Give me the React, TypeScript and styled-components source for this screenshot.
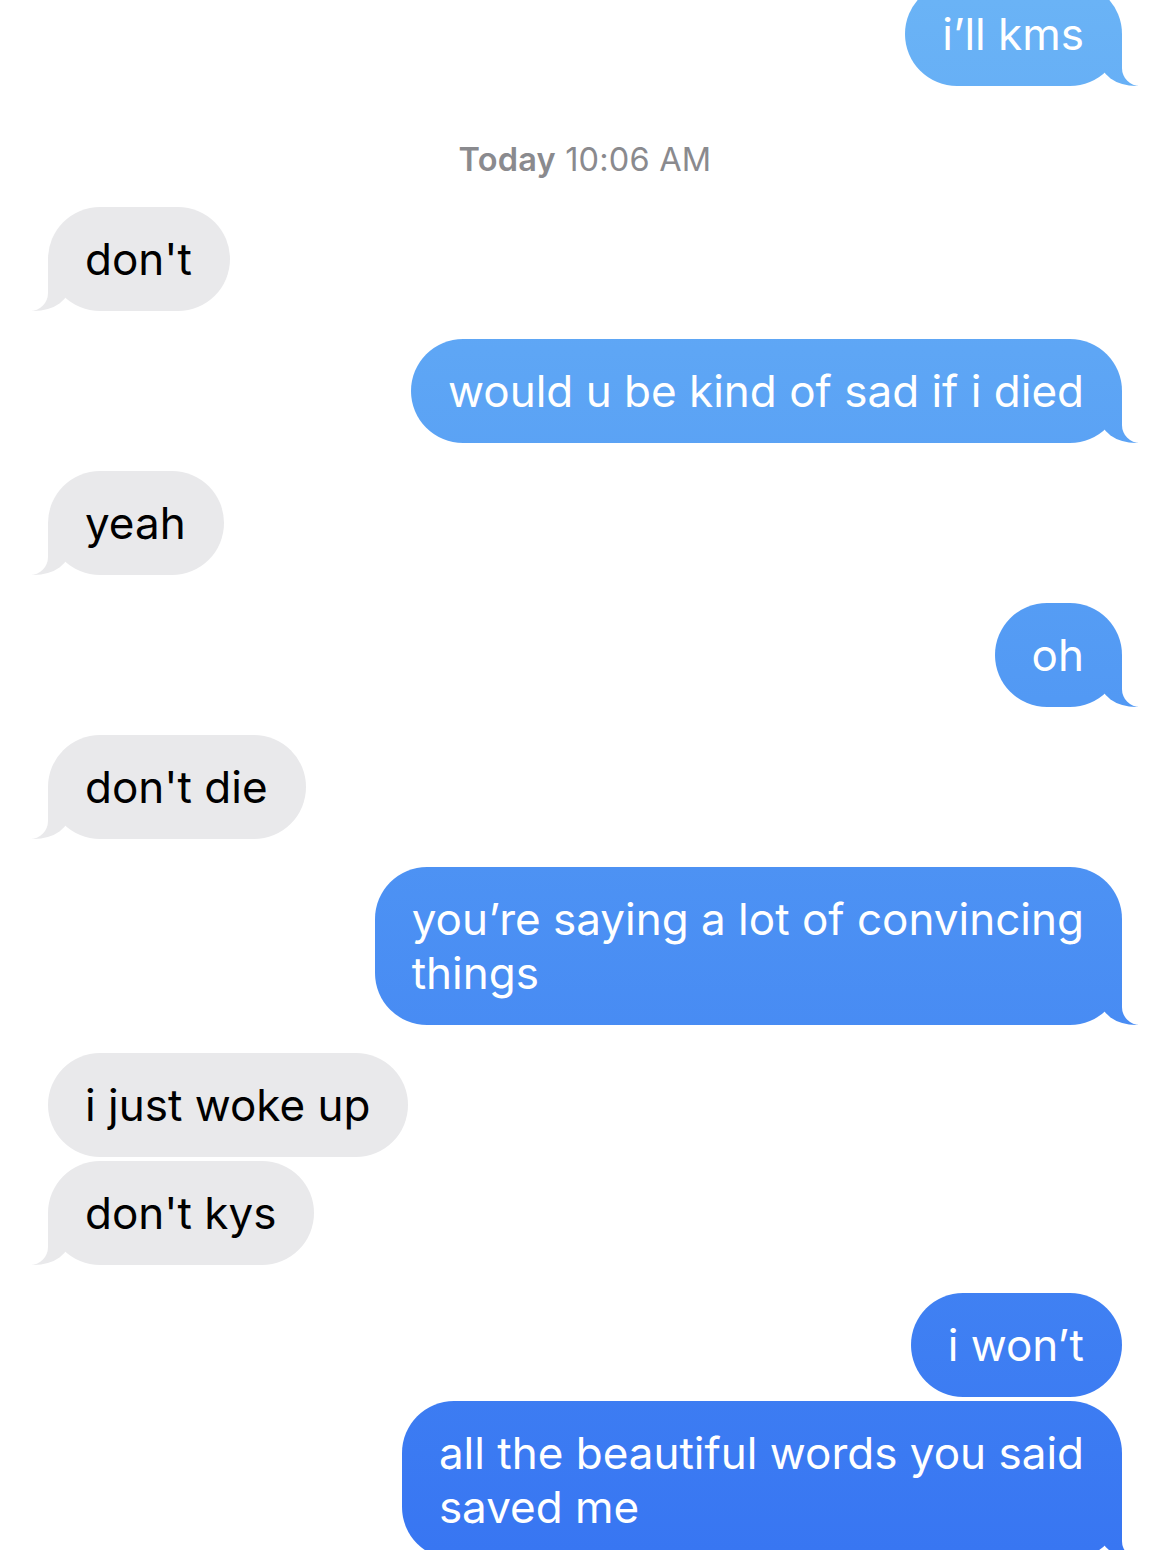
import React from 'react';
import styled, { createGlobalStyle, css } from 'styled-components';

const Global = createGlobalStyle`
  html, body { margin: 0; padding: 0; background: #ffffff; }
  body { font-family: Inter, "Liberation Sans", Arial, sans-serif; -webkit-font-smoothing: antialiased; }
`;

const BLUE = 'linear-gradient(to bottom, #6ab3f6 0px, #5299f4 700px, #3876f2 1550px) fixed';
const GRAY = '#e9e9eb';

const Thread = styled.div`
  display: flex;
  flex-direction: column;
  width: 1168px;
  box-sizing: border-box;
  padding: 0 46px 0 48px;
  margin-top: -18px;
`;

const Stamp = styled.div`
  align-self: center;
  margin: 54px 0 27px;
  font-size: 32.5px;
  line-height: 40px;
  color: #8a8a8e;
  letter-spacing: 0.2px;
  b { font-weight: 600; }
`;

const tailRight = css`
  &::before {
    content: '';
    position: absolute;
    right: -16px;
    bottom: 0;
    width: 38px;
    height: 52px;
    background: ${BLUE};
    border-bottom-left-radius: 36px 26px;
  }
  &::after {
    content: '';
    position: absolute;
    right: -30px;
    bottom: 0;
    width: 30px;
    height: 54px;
    background: #ffffff;
    border-bottom-left-radius: 18px;
  }
`;

const tailLeft = css`
  &::before {
    content: '';
    position: absolute;
    left: -16px;
    bottom: 0;
    width: 38px;
    height: 52px;
    background: ${GRAY};
    border-bottom-right-radius: 36px 26px;
  }
  &::after {
    content: '';
    position: absolute;
    left: -30px;
    bottom: 0;
    width: 30px;
    height: 54px;
    background: #ffffff;
    border-bottom-right-radius: 18px;
  }
`;

const Bubble = styled.div<{ $me: boolean; $tail: boolean; $gap: number }>`
  position: relative;
  align-self: ${(p) => (p.$me ? 'flex-end' : 'flex-start')};
  margin-top: ${(p) => p.$gap}px;
  padding: 25px 38px 25px 37px;
  border-radius: 52px;
  font-size: 44px;
  line-height: 54px;
  white-space: nowrap;
  color: ${(p) => (p.$me ? '#ffffff' : '#000000')};
  background: ${(p) => (p.$me ? BLUE : GRAY)};
  ${(p) => p.$tail && (p.$me ? tailRight : tailLeft)}
`;

const Line = styled.div`
  position: relative;
  z-index: 1;
`;

type Msg = { me: boolean; lines: string[]; tail: boolean; gap: number } | { stamp: true };

const messages: Msg[] = [
  { me: true, lines: ['i’ll kms'], tail: true, gap: 0 },
  { stamp: true },
  { me: false, lines: ["don't"], tail: true, gap: 0 },
  { me: true, lines: ['would u be kind of sad if i died'], tail: true, gap: 28 },
  { me: false, lines: ['yeah'], tail: true, gap: 28 },
  { me: true, lines: ['oh'], tail: true, gap: 28 },
  { me: false, lines: ["don't die"], tail: true, gap: 28 },
  { me: true, lines: ['you’re saying a lot of convincing', 'things'], tail: true, gap: 28 },
  { me: false, lines: ['i just woke up'], tail: false, gap: 28 },
  { me: false, lines: ["don't kys"], tail: true, gap: 4 },
  { me: true, lines: ['i won’t'], tail: false, gap: 28 },
  { me: true, lines: ['all the beautiful words you said', 'saved me'], tail: true, gap: 4 },
];

export default function App() {
  return (
    <>
      <Global />
      <Thread>
        {messages.map((m, i) =>
          'stamp' in m ? (
            <Stamp key={i}>
              <b>Today</b> 10:06 AM
            </Stamp>
          ) : (
            <Bubble key={i} $me={m.me} $tail={m.tail} $gap={m.gap}>
              {m.lines.map((l, j) => (
                <Line key={j}>{l}</Line>
              ))}
            </Bubble>
          )
        )}
      </Thread>
    </>
  );
}
